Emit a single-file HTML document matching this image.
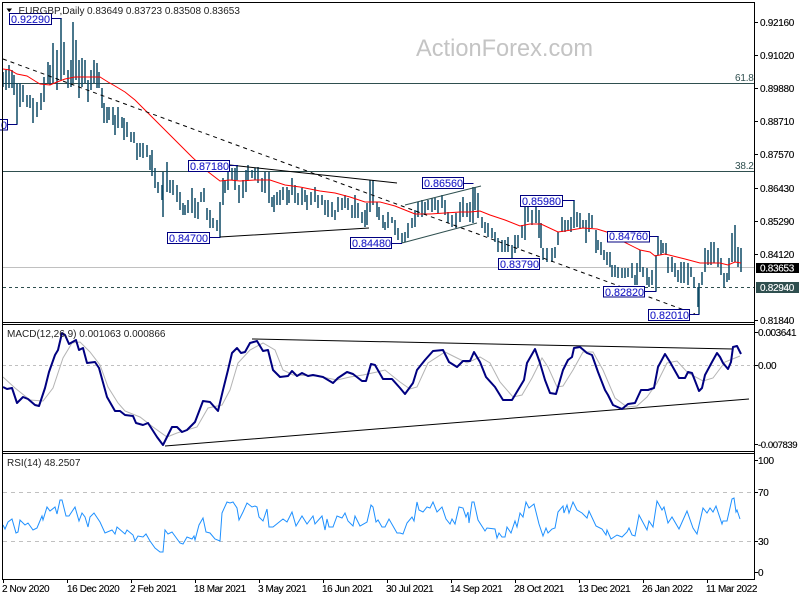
<!DOCTYPE html>
<html><head><meta charset="utf-8"><style>
html,body{margin:0;padding:0;background:#fff;width:800px;height:600px;overflow:hidden}
svg{display:block}
text{font-family:"Liberation Sans",sans-serif;font-size:10px;fill:#000;letter-spacing:-.3px;stroke:#000;stroke-width:.12}
text.l{fill:#2020c8;stroke:#2020c8;font-size:10.8px;letter-spacing:0}
text.w{fill:#fff;stroke:#fff}
text.g{fill:#2f4f4f;stroke:none;letter-spacing:-.2px}
text.t{fill:#222;stroke:none;letter-spacing:0}
text.m{stroke:none;fill:#c4c4c4;font-size:23.6px;letter-spacing:0}
text.d{letter-spacing:-.4px}
</style></head><body>
<svg width="800" height="600" viewBox="0 0 800 600" xmlns="http://www.w3.org/2000/svg">
<rect width="800" height="600" fill="#fff"/>
<text class="m" x="416" y="56">ActionForex.com</text>
<!-- levels -->
<path d="M3 83.5H754M3 171.5H754" stroke="#2f4f4f" fill="none"/>
<path d="M3 267.5H754" stroke="#c0c0c0" fill="none"/>
<path d="M3 287.5H754" stroke="#2f4f4f" stroke-dasharray="3 3" fill="none"/>
<text class="g" x="735" y="81">61.8</text>
<text class="g" x="735" y="169">38.2</text>
<!-- bars -->
<path fill="none" stroke="#0f4a66" stroke-width="1.5" d="M3 72V87M6 70V90M9 65V88M12 70V88M14 75V95M17 83V124M20 83V107M23 85V102M27 95V107M30 95V108M33 98V123M37 102V117M41 93V110M44 77V102M48 62V83M50 65V85M53 43V83M57 50V90M61 18V80M64 42V75M68 70V88M71 60V87M73 22V83M76 40V80M79 60V98M82 58V87M85 60V83M88 80V102M91 70V90M94 60V83M97 63V88M99 72V88M102 88V108M104 103V123M107 107V123M109 107V120M113 107V125M115 115V135M118 107V128M122 117V128M124 118V140M127 122V137M131 132V142M134 132V143M137 143V160M140 143V157M143 143V158M147 145V157M150 155V170M152 150V176M155 168V188M158 182V193M162 185V200M163 172V217M167 162V192M170 180V193M173 180V195M177 185V202M180 192V210M183 203V215M185 205V215M188 200V213M192 188V213M195 198V218M198 202V219M201 192V202M204 188V202M207 208V220M210 210V228M213 218V228M217 220V231M220 202V237M223 178V205M225 180V193M228 168V190M232 168V180M235 168V190M237 165V180M239 185V203M243 180V198M246 170V192M248 165V180M252 170V178M255 168V180M258 167V183M262 178V192M265 172V193M269 172V203M272 197V207M274 195V212M277 192V205M280 190V205M283 187V200M287 187V205M289 190V203M292 178V195M295 185V203M298 193V205M302 188V205M305 190V202M307 195V210M311 192V205M315 187V202M318 195V208M322 195V205M325 200V215M328 200V217M332 202V217M335 210V220M338 197V212M342 198V210M345 195V208M348 198V210M352 205V218M355 195V218M358 203V218M362 212V223M365 210V227M367 203V225M370 180V212M373 180V205M377 202V217M379 207V220M383 215V228M385 222V230M388 212V228M392 217V223M395 220V235M398 228V240M402 233V243M405 232V242M408 223V238M412 218V228M415 210V227M418 202V217M422 200V217M425 202V215M428 200V210M432 198V212M435 198V210M438 200V213M442 195V208M445 200V215M448 212V223M452 215V227M456 213V228M460 202V222M463 197V217M467 203V217M470 202V222M473 187V223M475 187V210M478 193V218M482 217V228M485 222V233M488 223V237M492 228V238M495 232V242M498 238V252M502 240V252M505 240V252M508 237V252M512 245V258M515 235V253M518 235V248M522 225V238M525 203V240M528 203V222M532 210V225M536 207V223M539 210V238M541 223V248M543 248V260M547 248V262M552 248V262M555 247V258M558 232V245M562 217V232M565 220V232M568 220V230M571 217V232M574 200V228M577 212V227M580 213V228M583 220V228M586 220V243M589 213V232M592 215V228M596 230V253M598 240V250M601 242V255M604 250V260M607 252V265M610 252V267M612 265V277M615 265V277M618 267V278M622 268V278M625 268V278M628 268V277M632 263V278M635 275V285M637 263V285M640 250V272M643 267V277M647 268V285M649 277V287M652 270V285M656 255V291M658 236V255M661 240V255M663 243V253M666 243V255M668 257V273M672 257V272M675 263V277M678 270V282M681 262V283M684 262V283M688 263V285M691 267V277M694 277V288M698 287V307M699 283V314M702 272V285M705 248V272M708 250V265M711 242V265M714 242V263M718 248V267M721 258V275M724 273V287M727 273V282M729 258V280M732 233V262M735 225V262M738 247V267M741 248V272"/>
<!-- red MA -->
<polyline fill="none" stroke="#ff0000" stroke-width="1" points="3,69 10,70 17,74 27,76 35,81 40,84 50,85 57,82 65,79 75,77 90,77 100,77 108,82 115,86 125,92 135,100 145,110 155,120 170,135 180,145 192,157 207,171 220,181 230,180 240,181 255,180 270,180 285,185 300,187 320,191 335,193 350,197 365,202 380,202 395,206 405,210 415,214 430,214 445,213 460,212 470,212 480,211 490,215 505,220 520,226 530,224 541,224 558,232 565,231 583,228 597,229 610,233 620,240 640,250 650,252 655,256 665,254 685,259 700,263 712,263 720,263 728,265 735,262 741,263"/>
<!-- dashed trend -->
<path d="M3 59L695 314" stroke="#000" stroke-width="1" stroke-dasharray="4 4" fill="none"/>
<!-- trend lines -->
<path d="M230 165L397 183M220 237L369 228" stroke="#000" stroke-width="1" fill="none"/>
<path d="M405 205L481 186M402 243L477 223" stroke="#2f4f4f" stroke-width="1" fill="none"/>
<!-- label connectors -->
<path d="M52 18.5H61.5M7 124.5H17.5M230 165.5H238M209 237.5H220.5M392 243.5H402M464 183.5H473.5M563 200.5H574.5M650 236.5H658.5M645 291.5H656.5M690 314.5H699.5" stroke="#000080" fill="none"/>
<!-- labels -->
<g fill="#fff" stroke="#000080">
<rect x="9.5" y="13.5" width="42" height="11"/>
<rect x="-3" y="119.5" width="10.5" height="10.5"/>
<rect x="188.5" y="160.5" width="41" height="11"/>
<rect x="167.5" y="232.5" width="42" height="11"/>
<rect x="350.5" y="237.5" width="41" height="11"/>
<rect x="422.5" y="177.5" width="41" height="11"/>
<rect x="498.5" y="258.5" width="41" height="11"/>
<rect x="520.5" y="195.5" width="42" height="11"/>
<rect x="607.5" y="231.5" width="42" height="10.5"/>
<rect x="603.5" y="286.5" width="41" height="10.5"/>
<rect x="648.5" y="309.5" width="41" height="11"/>
</g>
<text class="l" x="11" y="23">0.92290</text>
<text class="l" x="1" y="129">0</text>
<text class="l" x="190" y="170">0.87180</text>
<text class="l" x="169" y="242">0.84700</text>
<text class="l" x="352" y="247">0.84480</text>
<text class="l" x="424" y="187">0.86560</text>
<text class="l" x="500" y="268">0.83790</text>
<text class="l" x="522" y="205">0.85980</text>
<text class="l" x="609" y="240">0.84760</text>
<text class="l" x="605" y="296">0.82820</text>
<text class="l" x="650" y="319">0.82010</text>
<!-- title -->
<path d="M6.5 8.5H12L9.2 12.2Z" fill="#000"/>
<text class="t" x="18.5" y="14">EURGBP,Daily</text>
<text class="t" x="87" y="14">0.83649 0.83723 0.83508 0.83653</text>
<!-- MACD -->
<path d="M3 365.5H754" stroke="#c0c0c0" stroke-dasharray="3 3" fill="none"/>
<polyline fill="none" stroke="#b4b4b4" stroke-width="1" points="3,377 15,388 30,400 43,401 53,388 63,358 72,343 80,342 90,352 100,365 108,387 118,403 125,411 140,417 153,427 167,437 177,433 197,427 208,408 222,405 230,390 238,363 250,350 263,343 275,350 283,370 293,375 317,376 337,380 350,377 363,375 377,372 385,370 400,382 410,389 417,387 428,363 445,352 457,358 467,363 480,357 490,363 500,382 513,397 522,395 532,378 542,358 548,367 557,387 563,386 573,370 583,352 593,352 603,370 615,398 627,407 637,406 647,397 657,383 667,363 677,361 688,373 703,381 713,378 725,362 740,356"/>
<path d="M252 339L733 349M165 446L749 399" stroke="#000" stroke-width="1" fill="none"/>
<polyline fill="none" stroke="#000080" stroke-width="2" stroke-linejoin="round" points="3,387 7,389 12,388 17,403 23,397 28,399 35,405 39,406 45,388 49,372 55,355 58,350 62,333 65,335 69,344 76,340 79,350 83,348 87,363 95,362 99,368 107,397 115,411 120,411 125,415 133,416 136,423 143,425 148,423 157,437 163,445 172,427 177,427 182,432 187,430 195,422 203,401 210,402 218,411 223,390 228,370 232,353 237,348 241,353 245,352 250,343 257,341 263,351 268,350 273,370 280,377 288,376 292,371 297,376 302,373 308,376 313,375 323,377 333,383 338,378 347,372 353,374 362,381 366,381 371,364 375,365 383,379 392,379 400,388 405,394 413,383 417,370 425,360 433,351 443,350 449,362 457,367 463,361 470,361 474,352 480,362 486,377 495,387 503,400 512,400 518,390 524,380 527,363 535,349 540,363 545,380 550,393 556,394 563,370 568,360 572,357 574,348 580,347 587,353 592,355 598,372 605,390 608,395 613,405 622,409 628,404 635,403 641,390 648,390 654,388 658,367 665,354 670,362 679,378 685,378 688,372 692,373 699,391 702,388 705,375 712,362 717,353 720,357 723,363 728,369 731,362 733,347 737,346 741,354"/>
<text class="t" x="7" y="337">MACD(12,26,9) 0.001063 0.000866</text>
<!-- RSI -->
<path d="M3 492.5H754M3 541.5H754" stroke="#c0c0c0" stroke-dasharray="4 4" fill="none"/>
<polyline fill="none" stroke="#1e90ff" stroke-width="1" points="3,525 5,529 8,522 12,519 16,533 18,532 20,520 25,525 28,523 33,530 37,528 42,516 43,520 47,507 50,511 55,507 57,514 60,500 62,500 66,516 69,516 75,507 79,521 82,513 85,517 88,527 90,517 94,513 100,522 105,533 112,530 115,534 117,527 125,534 127,530 133,535 135,541 138,536 143,537 146,534 150,541 155,548 160,552 163,552 165,530 168,534 172,532 180,543 183,544 187,537 192,539 194,536 195,540 199,525 203,518 206,532 210,533 215,539 220,541 222,513 227,502 230,503 233,502 237,508 239,520 243,512 247,503 252,507 255,506 257,507 259,517 263,521 267,509 269,527 273,527 278,523 283,519 287,522 292,512 296,526 302,516 307,524 313,516 315,524 322,516 325,530 327,519 329,527 333,527 337,516 342,518 345,513 348,521 353,526 355,516 360,526 367,522 371,505 373,507 376,522 378,520 382,527 385,527 389,519 397,533 400,533 403,534 407,523 412,517 414,521 417,502 419,510 423,512 427,507 430,508 433,502 437,512 442,507 446,519 450,524 452,519 455,524 459,507 463,508 466,517 468,512 469,523 472,502 474,502 478,520 485,531 487,528 495,529 497,538 499,533 502,537 505,537 507,527 511,533 515,521 517,527 520,513 523,517 526,502 529,508 534,504 539,524 543,536 546,528 548,533 552,529 555,528 558,512 563,506 564,513 567,505 569,513 573,502 577,510 582,513 587,518 589,511 596,526 602,529 606,535 607,530 611,539 617,535 622,537 627,532 629,528 632,535 635,536 639,515 647,530 649,521 653,527 657,501 662,510 664,507 668,523 672,517 679,529 687,511 693,528 697,534 703,508 707,513 710,508 713,512 716,506 722,524 723,521 727,521 732,499 734,498 736,512 737,510 740,519"/>
<text class="t" x="7" y="466">RSI(14) 48.2507</text>
<!-- frames -->
<path d="M2.5 2.5H754.5V579.5H2.5ZM2.5 322.5H754.5M2.5 324.5H754.5M2.5 451.5H754.5M2.5 453.5H754.5" fill="none" stroke="#000"/>
<path d="M754 22.5h4M754 55.5h4M754 88.5h4M754 121.5h4M754 154.5h4M754 188.5h4M754 221.5h4M754 254.5h4M754 320.5h4M754 332.5h4M754 365.5h4M754 444.5h4M754 460.5h4M754 492.5h4M754 541.5h4M754 572.5h4M3.5 579v4M67.5 579v4M131.5 579v4M195.5 579v4M259.5 579v4M323.5 579v4M387.5 579v4M451.5 579v4M515.5 579v4M579.5 579v4M643.5 579v4M707.5 579v4" fill="none" stroke="#000"/>
<!-- price axis -->
<text x="760" y="26">0.92160</text>
<text x="760" y="59">0.91020</text>
<text x="760" y="92">0.89880</text>
<text x="760" y="125">0.88710</text>
<text x="760" y="158">0.87570</text>
<text x="760" y="192">0.86430</text>
<text x="760" y="225">0.85290</text>
<text x="760" y="258">0.84120</text>
<text x="760" y="324">0.81840</text>
<rect x="756" y="263" width="43" height="10" fill="#000"/>
<text class="w" x="760" y="271.5">0.83653</text>
<rect x="756" y="282" width="43" height="11" fill="#2f4f4f"/>
<text class="w" x="760" y="291">0.82940</text>
<text x="758" y="336" style="letter-spacing:-.45px">0.003641</text>
<text x="758" y="369">0.00</text>
<text x="758" y="448" style="letter-spacing:-.45px;font-size:9.6px">-0.007839</text>
<text x="758" y="464">100</text>
<text x="758" y="496">70</text>
<text x="758" y="545">30</text>
<text x="758" y="576">0</text>
<!-- time axis -->
<text class="d" x="2" y="592">2 Nov 2020</text>
<text class="d" x="67" y="592">16 Dec 2020</text>
<text class="d" x="130" y="592">2 Feb 2021</text>
<text class="d" x="194" y="592">18 Mar 2021</text>
<text class="d" x="258" y="592">3 May 2021</text>
<text class="d" x="322" y="592">16 Jun 2021</text>
<text class="d" x="386" y="592">30 Jul 2021</text>
<text class="d" x="450" y="592">14 Sep 2021</text>
<text class="d" x="514" y="592">28 Oct 2021</text>
<text class="d" x="578" y="592">13 Dec 2021</text>
<text class="d" x="642" y="592">26 Jan 2022</text>
<text class="d" x="706" y="592">11 Mar 2022</text>
</svg>
</body></html>
